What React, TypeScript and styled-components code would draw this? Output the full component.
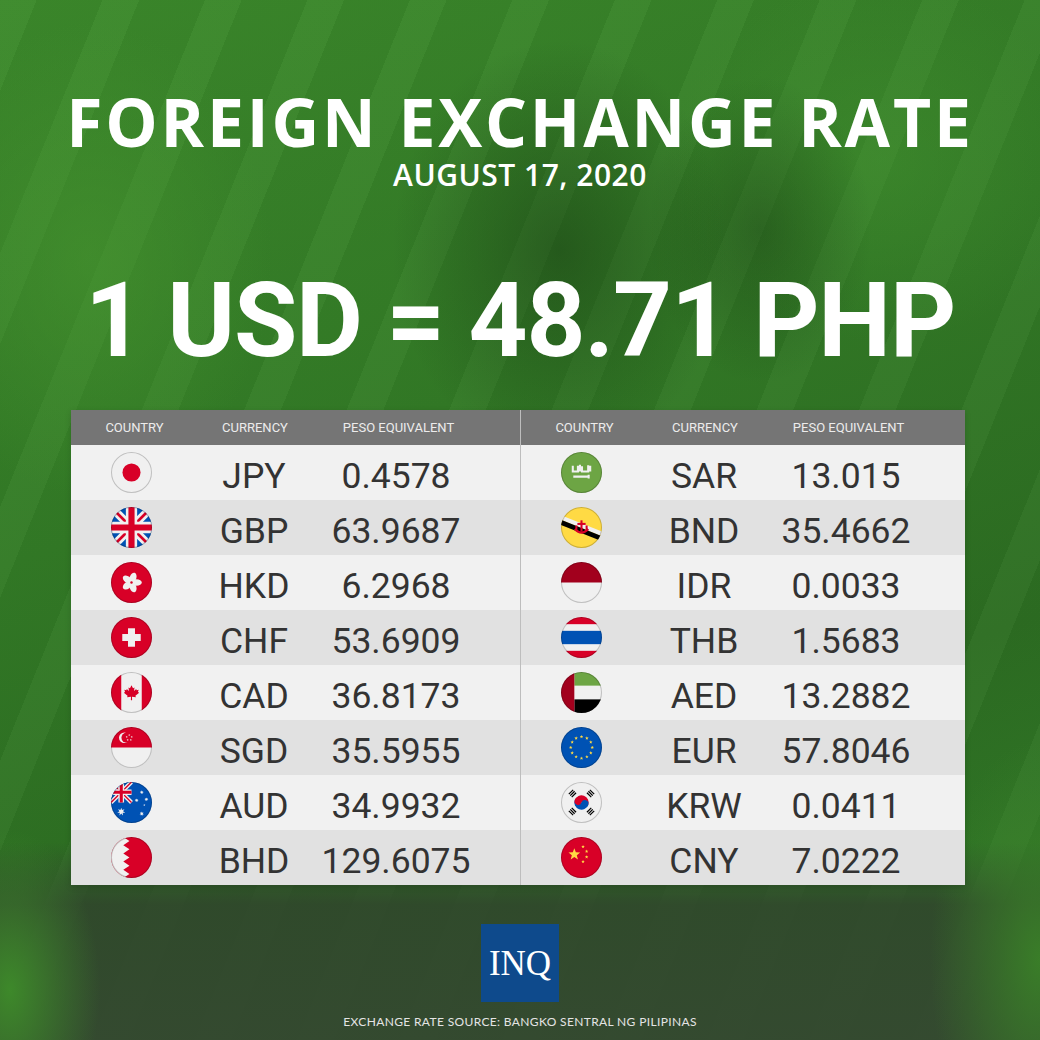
import React from "react";
import styled, { createGlobalStyle } from "styled-components";

const GlobalStyle = createGlobalStyle`
  html, body { margin: 0; padding: 0; background: #2f6e25; }
`;

const RED = "#d80027";
const BLUE = "#0052b4";
const WHITE = "#f0f0f0";
const GREEN = "#6da544";
const YELLOW = "#ffda44";
const DARKRED = "#a2001d";

function star(cx: number, cy: number, r: number, n = 5, inner = 0.42, rot = -90) {
  const pts: string[] = [];
  for (let i = 0; i < n * 2; i++) {
    const rr = i % 2 === 0 ? r : r * inner;
    const a = ((rot + (i * 180) / n) * Math.PI) / 180;
    pts.push(`${(cx + rr * Math.cos(a)).toFixed(2)},${(cy + rr * Math.sin(a)).toFixed(2)}`);
  }
  return pts.join(" ");
}

const UnionJack = () => (
  <g>
    <rect width="40" height="40" fill={BLUE} />
    <path d="M0 0L40 40M40 0L0 40" stroke={WHITE} strokeWidth="8" />
    <path d="M0 0L40 40M40 0L0 40" stroke={RED} strokeWidth="2.6" />
    <path d="M20 0V40M0 20H40" stroke={WHITE} strokeWidth="11" />
    <path d="M20 0V40M0 20H40" stroke={RED} strokeWidth="6" />
  </g>
);

const FLAGS: Record<string, React.ReactNode> = {
  JPY: (
    <g>
      <rect width="40" height="40" fill={WHITE} />
      <circle cx="20" cy="20" r="8.8" fill={RED} />
    </g>
  ),
  GBP: <UnionJack />,
  HKD: (
    <g>
      <rect width="40" height="40" fill={RED} />
      {[0, 1, 2, 3, 4].map((i) => (
        <ellipse
          key={i}
          cx="20"
          cy="15"
          rx="3.2"
          ry="5"
          fill={WHITE}
          transform={`rotate(${i * 72 + 18} 20 20)`}
        />
      ))}
      <circle cx="20" cy="20" r="1.2" fill={RED} />
    </g>
  ),
  CHF: (
    <g>
      <rect width="40" height="40" fill={RED} />
      <rect x="16.6" y="11" width="6.8" height="18" fill={WHITE} />
      <rect x="11" y="16.6" width="18" height="6.8" fill={WHITE} />
    </g>
  ),
  CAD: (
    <g>
      <rect width="40" height="40" fill={WHITE} />
      <rect width="10" height="40" fill={RED} />
      <rect x="30" width="10" height="40" fill={RED} />
      <path
        d="M20 13 L21.5 15.8 L23 15 L22.4 18.6 L24.6 16.6 L25 17.9 L27 17.4 L26.3 19.6 L27.5 20.2 L23.8 23.2 L24.3 24.6 L20.5 24.1 L20.6 27.5 L19.4 27.5 L19.5 24.1 L15.7 24.6 L16.2 23.2 L12.5 20.2 L13.7 19.6 L13 17.4 L15 17.9 L15.4 16.6 L17.6 18.6 L17 15 L18.5 15.8 Z"
        fill={RED}
      />
    </g>
  ),
  SGD: (
    <g>
      <rect width="40" height="40" fill={WHITE} />
      <rect width="40" height="20" fill={RED} />
      <circle cx="13" cy="10.5" r="5.2" fill={WHITE} />
      <circle cx="15" cy="10.5" r="4.8" fill={RED} />
      {[0, 1, 2, 3, 4].map((i) => {
        const a = ((-90 + i * 72) * Math.PI) / 180;
        return (
          <polygon key={i} points={star(17.8 + 2.6 * Math.cos(a), 10.5 + 2.6 * Math.sin(a), 1.1)} fill={WHITE} />
        );
      })}
    </g>
  ),
  AUD: (
    <g>
      <rect width="40" height="40" fill={BLUE} />
      <g transform="scale(0.5)">
        <UnionJack />
      </g>
      <polygon points={star(10, 29, 4, 7, 0.45)} fill={WHITE} />
      <polygon points={star(30, 10, 2, 7, 0.45)} fill={WHITE} />
      <polygon points={star(25, 18, 2, 7, 0.45)} fill={WHITE} />
      <polygon points={star(34.5, 17, 2, 7, 0.45)} fill={WHITE} />
      <polygon points={star(30, 31, 2.2, 7, 0.45)} fill={WHITE} />
      <polygon points={star(32.5, 22.5, 1.1, 5, 0.45)} fill={WHITE} />
    </g>
  ),
  BHD: (
    <g>
      <rect width="40" height="40" fill={RED} />
      <polygon
        points="0,0 12,0 18,4 12,8 18,12 12,16 18,20 12,24 18,28 12,32 18,36 12,40 0,40"
        fill={WHITE}
      />
    </g>
  ),
  SAR: (
    <g>
      <rect width="40" height="40" fill={GREEN} />
      <path
        d="M11.5 13.5 V19 H16.5 V13.5 M18.5 12.5 V19 M20.5 14 V19 H26.5 V13 M28.5 13.5 V19"
        stroke={WHITE}
        strokeWidth="2"
        fill="none"
      />
      <path d="M12 24 H27 M27 22.2 V25.8" stroke={WHITE} strokeWidth="2" fill="none" />
    </g>
  ),
  BND: (
    <g>
      <rect width="40" height="40" fill={YELLOW} />
      <polygon points="0,8 40,24 40,28.5 0,12.5" fill={WHITE} />
      <polygon points="0,12.5 40,28.5 40,33.5 0,17.5" fill="#000" />
      <path d="M13.5 21.5 Q20 28.5 26.5 21.5" stroke={RED} strokeWidth="2.4" fill="none" />
      <rect x="19" y="13" width="2" height="11" fill={RED} />
      <rect x="16" y="15.5" width="8" height="2" fill={RED} />
      <rect x="14" y="18" width="2" height="4" fill={RED} />
      <rect x="24" y="18" width="2" height="4" fill={RED} />
    </g>
  ),
  IDR: (
    <g>
      <rect width="40" height="40" fill={WHITE} />
      <rect width="40" height="20" fill={DARKRED} />
    </g>
  ),
  THB: (
    <g>
      <rect width="40" height="40" fill={WHITE} />
      <rect width="40" height="7" fill={RED} />
      <rect y="33" width="40" height="7" fill={RED} />
      <rect y="13.5" width="40" height="13" fill={BLUE} />
    </g>
  ),
  AED: (
    <g>
      <rect width="40" height="40" fill={WHITE} />
      <rect x="13" width="27" height="13.3" fill={GREEN} />
      <rect x="13" y="26.7" width="27" height="13.3" fill="#000" />
      <rect width="13" height="40" fill={DARKRED} />
    </g>
  ),
  EUR: (
    <g>
      <rect width="40" height="40" fill={BLUE} />
      {Array.from({ length: 12 }).map((_, i) => {
        const a = (i * 30 * Math.PI) / 180;
        return <polygon key={i} points={star(20 + 10.5 * Math.cos(a), 20 + 10.5 * Math.sin(a), 1.8)} fill={YELLOW} />;
      })}
    </g>
  ),
  KRW: (
    <g>
      <rect width="40" height="40" fill={WHITE} />
      <g transform="rotate(20 20 20)">
        <path d="M13 20 A7 7 0 0 1 27 20 Z" fill={RED} />
        <path d="M13 20 A7 7 0 0 0 27 20 Z" fill={BLUE} />
        <circle cx="16.5" cy="20" r="3.5" fill={RED} />
        <circle cx="23.5" cy="20" r="3.5" fill={BLUE} />
      </g>
      {[-135, -45, 45, 135].map((a) => {
        const r = (a * Math.PI) / 180;
        const x = 20 + 12.5 * Math.cos(r);
        const y = 20 + 12.5 * Math.sin(r);
        return (
          <g key={a} transform={`translate(${x} ${y}) rotate(${a + 90})`}>
            <rect x="-3" y="-2.6" width="6" height="1.2" fill="#000" />
            <rect x="-3" y="-0.6" width="6" height="1.2" fill="#000" />
            <rect x="-3" y="1.4" width="6" height="1.2" fill="#000" />
          </g>
        );
      })}
    </g>
  ),
  CNY: (
    <g>
      <rect width="40" height="40" fill={RED} />
      <polygon points={star(13, 17, 6)} fill={YELLOW} />
      <polygon points={star(21.5, 9.5, 1.8)} fill={YELLOW} />
      <polygon points={star(25, 14, 1.8)} fill={YELLOW} />
      <polygon points={star(25, 19.5, 1.8)} fill={YELLOW} />
      <polygon points={star(21.5, 24, 1.8)} fill={YELLOW} />
    </g>
  ),
};

const FlagSvg = styled.svg`
  width: 41px;
  height: 41px;
  display: block;
`;

const Flag = ({ code }: { code: string }) => (
  <FlagSvg viewBox="0 0 40 40">
    <defs>
      <clipPath id={`clip-${code}`}>
        <circle cx="20" cy="20" r="20" />
      </clipPath>
    </defs>
    <g clipPath={`url(#clip-${code})`}>{FLAGS[code]}</g>
    <circle cx="20" cy="20" r="19.5" fill="none" stroke="rgba(0,0,0,0.2)" strokeWidth="1" />
  </FlagSvg>
);

// green-toned stand-in for the banknote photo behind everything
const Poster = styled.div`
  width: 1040px;
  height: 1040px;
  overflow: hidden;
  display: flex;
  flex-direction: column;
  align-items: center;
  background:
    radial-gradient(ellipse 90px 160px at 10px 990px, rgba(62, 140, 42, 0.95), rgba(62, 140, 42, 0) 100%),
    radial-gradient(ellipse 110px 220px at 1040px 960px, rgba(58, 128, 40, 0.95), rgba(58, 128, 40, 0) 100%),
    linear-gradient(180deg, rgba(0, 0, 0, 0) 0%, rgba(0, 0, 0, 0) 81%, rgba(48, 70, 44, 0.9) 87%, rgba(52, 72, 48, 0.96) 100%),
    radial-gradient(ellipse 240px 300px at 560px 250px, rgba(20, 50, 16, 0.45), rgba(20, 50, 16, 0) 70%),
    radial-gradient(ellipse 160px 220px at 760px 230px, rgba(18, 46, 14, 0.35), rgba(18, 46, 14, 0) 70%),
    radial-gradient(ellipse 300px 260px at 880px 160px, rgba(70, 150, 50, 0.4), rgba(70, 150, 50, 0) 70%),
    radial-gradient(ellipse 260px 340px at 90px 260px, rgba(72, 150, 48, 0.55), rgba(72, 150, 48, 0) 70%),
    repeating-linear-gradient(112deg, rgba(255, 255, 255, 0.025) 0px, rgba(255, 255, 255, 0.025) 34px, rgba(0, 0, 0, 0.035) 34px, rgba(0, 0, 0, 0.035) 95px),
    linear-gradient(160deg, #3c8a2b 0%, #337b26 40%, #2d6e22 70%, #34802a 100%);
  font-family: "Roboto", "Liberation Sans", sans-serif;
`;

const Title = styled.h1`
  margin: 88px 0 0;
  font-family: "Open Sans", "Liberation Sans", sans-serif;
  font-weight: 700;
  font-size: 66px;
  line-height: 66px;
  letter-spacing: 2.8px;
  color: #fff;
  white-space: nowrap;
`;

const DateLine = styled.div`
  margin-top: 6px;
  font-family: "Open Sans", "Liberation Sans", sans-serif;
  font-weight: 600;
  font-size: 30px;
  line-height: 30px;
  letter-spacing: 0.5px;
  color: #fff;
`;

const Rate = styled.div`
  margin-top: 79px;
  font-family: "Roboto", "Liberation Sans", sans-serif;
  font-weight: 700;
  font-size: 103px;
  line-height: 103px;
  letter-spacing: -1.2px;
  color: #fff;
  white-space: nowrap;
`;

const Table = styled.div`
  margin-top: 38px;
  align-self: flex-start;
  margin-left: 71px;
  width: 894px;
  display: flex;
  box-shadow: 0 2px 6px rgba(0, 0, 0, 0.15);
`;

const Half = styled.div<{ $divider?: boolean }>`
  flex: ${(p) => (p.$divider ? "1" : "0 0 449px")};
  border-left: ${(p) => (p.$divider ? "1px solid #bdbdbd" : "none")};
`;

const HeadRow = styled.div`
  height: 35px;
  background: #757575;
  display: grid;
  grid-template-columns: 127px 114px 173px 1fr;
  align-items: center;
`;

const HeadCell = styled.div`
  text-align: center;
  font-size: 13px;
  color: #ececec;
  text-transform: uppercase;
  white-space: nowrap;
`;

const Row = styled.div<{ $shade: boolean }>`
  height: 55px;
  background: ${(p) => (p.$shade ? "#e1e1e1" : "#f1f1f1")};
  display: grid;
  grid-template-columns: 120px 126px 158px 1fr;
  align-items: center;
`;

const FlagCell = styled.div`
  display: flex;
  justify-content: center;
`;

const ValueCell = styled.div`
  text-align: center;
  font-size: 35.5px;
  line-height: 35px;
  padding-top: 8px;
  color: #333;
  white-space: nowrap;
`;

const Logo = styled.div`
  margin-top: 39px;
  width: 78px;
  height: 78px;
  background: #0e4a8c;
  display: flex;
  align-items: center;
  justify-content: center;
  font-family: "Liberation Serif", "DejaVu Serif", serif;
  font-size: 35px;
  color: #fff;
  padding-top: 2px;
  box-sizing: border-box;
`;

const Source = styled.div`
  margin-top: 14px;
  font-family: "Lato", "Open Sans", sans-serif;
  font-size: 12px;
  line-height: 12px;
  letter-spacing: 0.35px;
  color: #e4e4e4;
  white-space: nowrap;
`;

type Item = { code: string; value: string };

const LEFT: Item[] = [
  { code: "JPY", value: "0.4578" },
  { code: "GBP", value: "63.9687" },
  { code: "HKD", value: "6.2968" },
  { code: "CHF", value: "53.6909" },
  { code: "CAD", value: "36.8173" },
  { code: "SGD", value: "35.5955" },
  { code: "AUD", value: "34.9932" },
  { code: "BHD", value: "129.6075" },
];

const RIGHT: Item[] = [
  { code: "SAR", value: "13.015" },
  { code: "BND", value: "35.4662" },
  { code: "IDR", value: "0.0033" },
  { code: "THB", value: "1.5683" },
  { code: "AED", value: "13.2882" },
  { code: "EUR", value: "57.8046" },
  { code: "KRW", value: "0.0411" },
  { code: "CNY", value: "7.0222" },
];

const RateHalf = ({ items, divider }: { items: Item[]; divider?: boolean }) => (
  <Half $divider={divider}>
    <HeadRow>
      <HeadCell>Country</HeadCell>
      <HeadCell>Currency</HeadCell>
      <HeadCell>Peso Equivalent</HeadCell>
    </HeadRow>
    {items.map((it, i) => (
      <Row key={it.code} $shade={i % 2 === 1}>
        <FlagCell>
          <Flag code={it.code} />
        </FlagCell>
        <ValueCell>{it.code}</ValueCell>
        <ValueCell>{it.value}</ValueCell>
      </Row>
    ))}
  </Half>
);

export default function App() {
  return (
    <Poster>
      <GlobalStyle />
      <Title>FOREIGN EXCHANGE RATE</Title>
      <DateLine>AUGUST 17, 2020</DateLine>
      <Rate>1 USD = 48.71 PHP</Rate>
      <Table>
        <RateHalf items={LEFT} />
        <RateHalf items={RIGHT} divider />
      </Table>
      <Logo>INQ</Logo>
      <Source>EXCHANGE RATE SOURCE: BANGKO SENTRAL NG PILIPINAS</Source>
    </Poster>
  );
}
